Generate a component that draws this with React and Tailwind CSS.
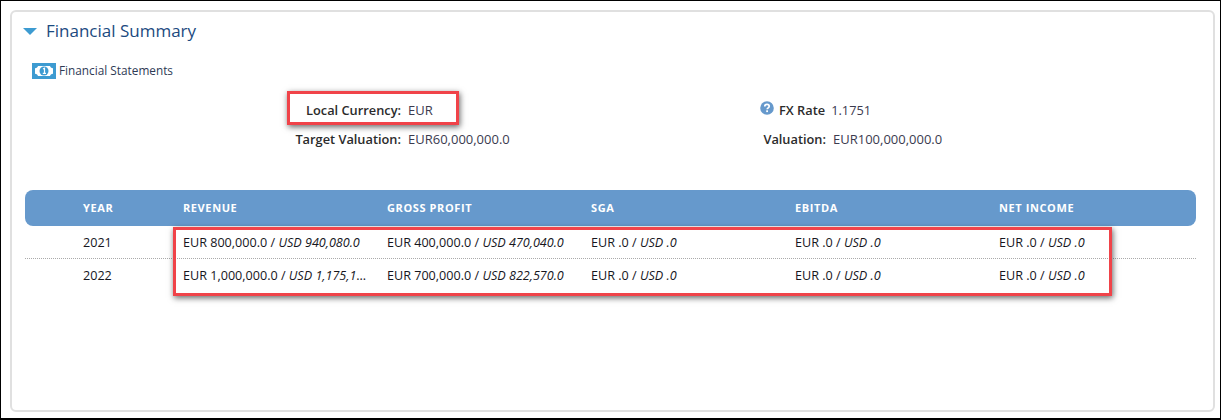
import React from "react";

const columns = ["YEAR", "REVENUE", "GROSS PROFIT", "SGA", "EBITDA", "NET INCOME"];

const rows = [
    { year: "2021", cells: [["EUR 800,000.0", "USD 940,080.0"], ["EUR 400,000.0", "USD 470,040.0"], ["EUR .0", "USD .0"], ["EUR .0", "USD .0"], ["EUR .0", "USD .0"]] },
    { year: "2022", cells: [["EUR 1,000,000.0", "USD 1,175,100.0"], ["EUR 700,000.0", "USD 822,570.0"], ["EUR .0", "USD .0"], ["EUR .0", "USD .0"], ["EUR .0", "USD .0"]] },
];

const MoneyIcon = () => (
    <svg width="24" height="16" viewBox="0 0 24 16" className="shrink-0">
        <path d="M0 0h24v16H0z" fill="#3d9bd1" />
        <path d="M6 3c-0.300 1.300-1.300 2-3 2.300v5.400c1.700 0.300 2.700 1 3 2.300h12c0.300-1.300 1.300-2 3-2.300V5.300C19.300 5 18.300 4.300 18 3z" fill="#ffffff" />
        <circle cx="12" cy="8" r="4.500" fill="#3d9bd1" />
        <path d="M11 6l1.500-0.700v5M10.800 10.400h3.200" stroke="#ffffff" strokeWidth="1.200" fill="none" />
    </svg>
);

const HelpIcon = () => (
    <svg width="14" height="14" viewBox="0 0 14 14" className="shrink-0">
        <circle cx="7" cy="7" r="6.800" fill="#6699cc" />
        <path d="M4.800 5.400c0-1.300 1-2 2.200-2s2.200 0.700 2.200 1.900c0 1.600-2 1.500-2 3" stroke="#ffffff" strokeWidth="1.700" fill="none" />
        <rect x="6.200" y="9.300" width="1.800" height="1.800" fill="#ffffff" />
    </svg>
);

const Field = ({ label, value, labelWidth }) => (
    <div className="flex items-center h-[29px]">
        <div className={`${labelWidth} shrink-0 text-right text-[12.8px] font-semibold text-[#2b2b2b]`}>{label}</div>
        <div className="ml-[7px] text-[13px] text-[#3b3b4f]">{value}</div>
    </div>
);

const App = () => {
    return (
        <div className="w-[1221px] h-[420px] border border-black border-b-2 bg-white pl-[9px] pt-[9px] pr-[5px] pb-[6px] text-xs text-[#16325c] font-['Open_Sans',sans-serif] relative overflow-hidden">
            <div className="h-full border-2 border-[#e0e0e0] rounded-md pl-[13px]">

                {/* Heading */}
                <div className="flex items-center h-[38px]">
                    <div className="-ml-[2px] w-0 h-0 border-l-[7px] border-r-[7px] border-t-[7px] border-l-transparent border-r-transparent border-t-[#3d9bd1]" />
                    <div className="ml-[9px] text-[17px] text-[#1b4a80]">Financial Summary</div>
                </div>

                {/* Statements link */}
                <div className="flex items-center gap-[3px] mt-[13px] ml-[7px]">
                    <MoneyIcon />
                    <span className="text-[11.8px] text-[#2e3a55]">Financial Statements</span>
                </div>

                {/* Currency details */}
                <div className="flex mt-[17px]">
                    <div className="w-[465px] shrink-0">
                        <Field label="Local Currency:" value="EUR" labelWidth="w-[376px]" />
                        <Field label="Target Valuation:" value="EUR60,000,000.0" labelWidth="w-[376px]" />
                    </div>
                    <div>
                        <div className="flex items-center h-[29px]">
                            <div className="ml-[270px] -mt-[5px]"><HelpIcon /></div>
                            <div className="ml-[5px] text-[12.8px] font-semibold text-[#2b2b2b]">FX Rate</div>
                            <div className="ml-[6px] text-[12.8px] text-[#3b3b4f]">1.1751</div>
                        </div>
                        <Field label="Valuation:" value="EUR100,000,000.0" labelWidth="w-[336px]" />
                    </div>
                </div>

                {/* Table */}
                <div className="mt-[36px] w-[1171px]">
                    <div className="grid grid-cols-[158px_204px_204px_204px_204px_1fr] items-center h-9 bg-[#6699cc] rounded-lg text-white text-[11px] font-bold tracking-[0.6px]">
                        {columns.map((col, i) => (
                            <div key={col} className={i === 0 ? "pl-[58px]" : ""}>{col}</div>
                        ))}
                    </div>
                    {rows.map((row, r) => (
                        <div
                            key={row.year}
                            className={`grid grid-cols-[158px_204px_204px_204px_204px_1fr] items-center h-[33px] pt-[2px] text-[12.6px] text-[#16161d] ${r === 0 ? "border-b border-dotted border-[#aaaaaa]" : ""}`}
                        >
                            <div className="pl-[58px]">{row.year}</div>
                            {row.cells.map((cell, c) => (
                                <div key={c} className="truncate pr-5">
                                    {cell[0]} / <em>{cell[1]}</em>
                                </div>
                            ))}
                        </div>
                    ))}
                </div>
            </div>

            {/* Red annotation boxes over the page */}
            <div className="absolute left-[286px] top-[90px] w-[172px] h-[34px] border-[3px] border-[#f04349] shadow-[1px_2px_6px_rgba(0,0,0,0.6)]" />
            <div className="absolute left-[172px] top-[226px] w-[939px] h-[69px] border-[3px] border-[#f04349] shadow-[1px_2px_6px_rgba(0,0,0,0.6)]" />
        </div>
    );
};

export default App;
